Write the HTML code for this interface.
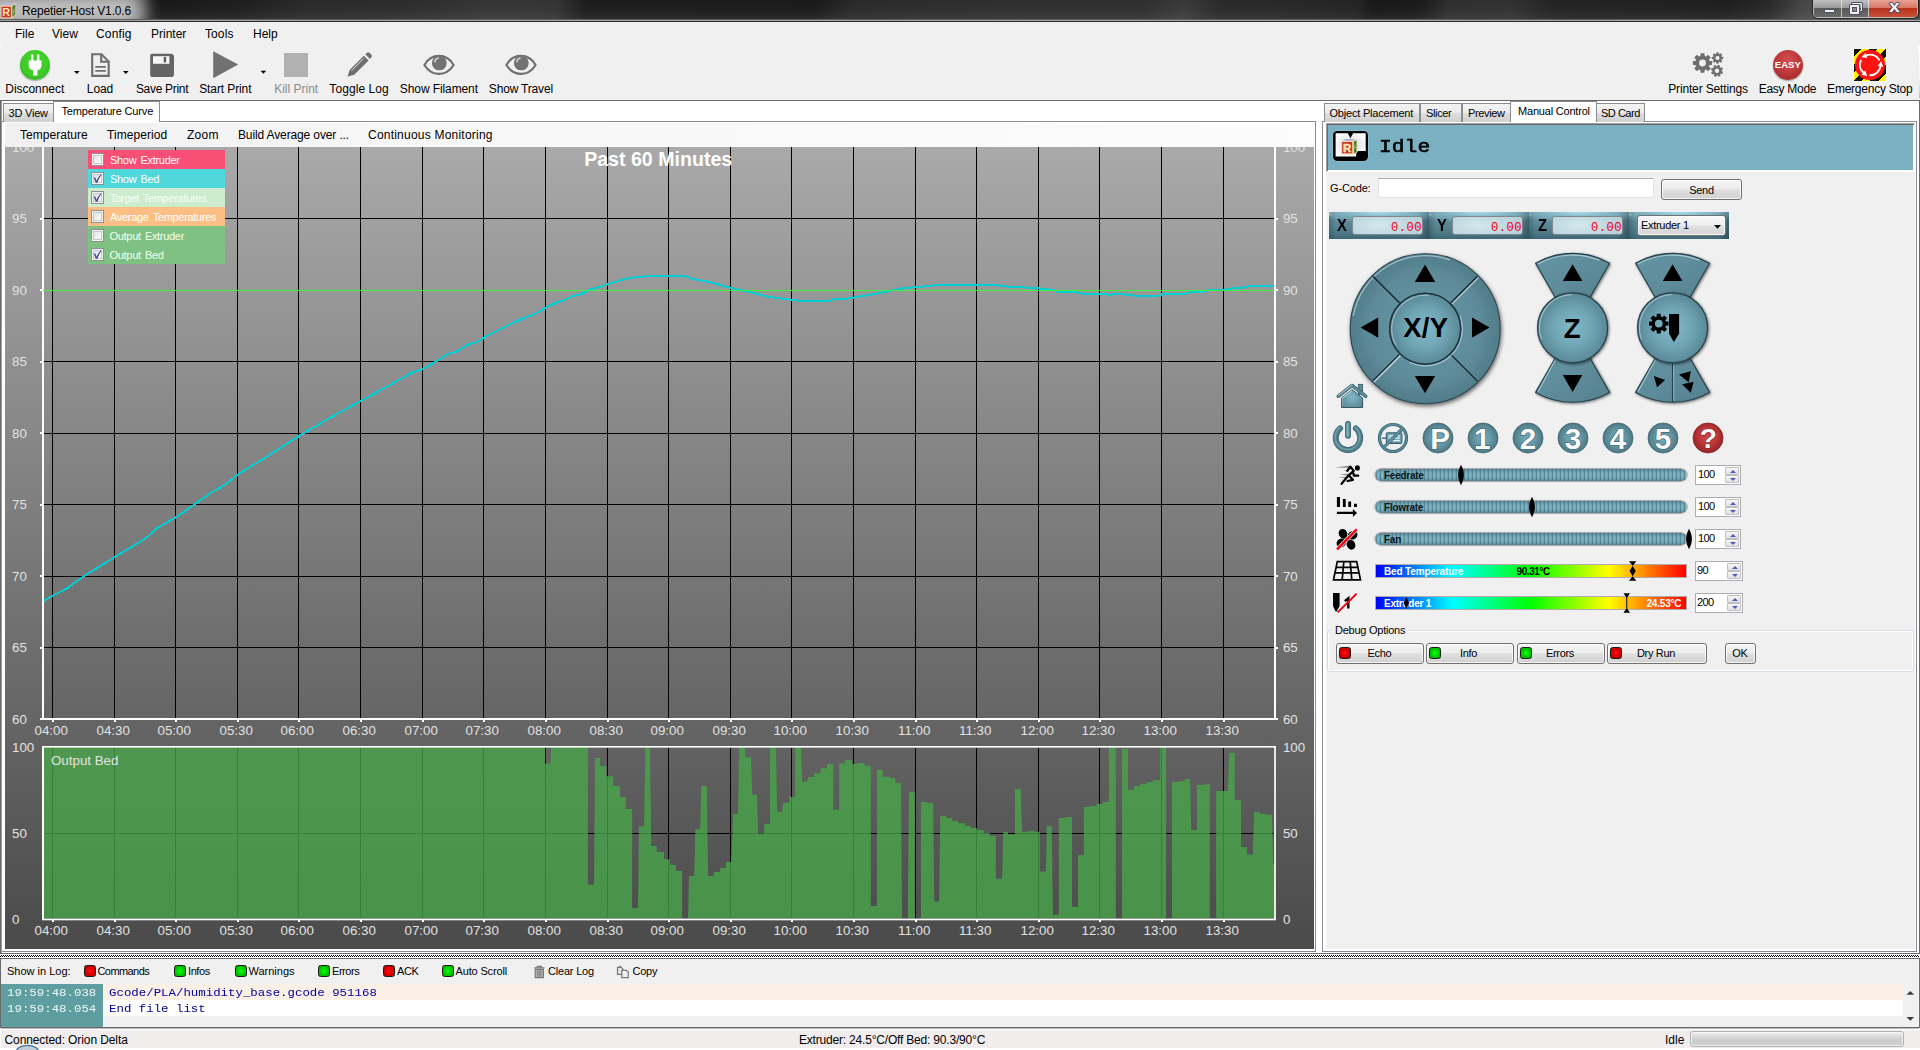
<!DOCTYPE html>
<html lang="en">
<head>
<meta charset="utf-8">
<title>Repetier-Host V1.0.6</title>
<style>
*{box-sizing:border-box;margin:0;padding:0}
html,body{width:1920px;height:1050px;overflow:hidden;background:#f0f0f0}
body{position:relative;font-family:"Liberation Sans",sans-serif;font-size:12px;color:#000}
.a{position:absolute}
.ui{position:absolute;font-family:"Liberation Sans",sans-serif;font-size:12px;line-height:14px;white-space:nowrap;color:#000}
.c{transform:translateX(-50%)}
.ms{position:absolute;font-family:"Liberation Sans",sans-serif;font-size:11px;line-height:13px;white-space:nowrap;color:#000;letter-spacing:-0.3px}
.tab{position:absolute;border:1px solid #898c95;border-bottom:none;background:linear-gradient(#f3f3f3 0%,#ececec 48%,#dedede 52%,#d0d0d0 100%);height:19px;top:103px}
.tab.sel{background:#fff;top:101px;height:21px;z-index:3}
.btn{position:absolute;border:1px solid #707070;border-radius:3px;background:linear-gradient(#f4f4f4 0%,#ececec 48%,#dedede 52%,#d1d1d1 100%);box-shadow:inset 0 0 0 1px rgba(255,255,255,.75)}
.led{position:absolute;width:12px;height:12px;border:1px solid #1a1a1a;border-radius:2.5px}
.led.r{background:radial-gradient(circle at 50% 50%,#ff1010 0%,#e00000 45%,#a80000 100%)}
.led.g{background:radial-gradient(circle at 50% 50%,#10ff10 0%,#00d800 45%,#009a00 100%)}
.cb{position:absolute;width:13px;height:13px;border:1px solid #8e8f8f;background:linear-gradient(135deg,#d8dbe0 0%,#f4f4f4 60%,#fff 100%);box-shadow:inset 0 0 0 1px #f4f4f4,inset 0 0 0 2px #c4c8cc}
.spin{position:absolute;height:20px;border:1px solid #abadb3;background:#fff}
.spin b{position:absolute;right:1px;width:14px;height:8px;border:1px solid #c0c0c0;border-radius:1px;background:linear-gradient(#f6f6f6,#e2e2e2);font-weight:normal}
.spin b.u{top:1px}.spin b.d{top:9px}
.spin b:after{content:"";position:absolute;left:3.5px;border-left:3px solid transparent;border-right:3px solid transparent}
.spin b.u:after{top:1.5px;border-bottom:3px solid #4a5cc0}
.spin b.d:after{top:1.5px;border-top:3px solid #4a5cc0}
.track{position:absolute;left:1375px;width:311.500px;height:12px;border-radius:6px;background:linear-gradient(rgba(35,75,90,.38) 0%,rgba(35,75,90,0) 32%,rgba(35,75,90,0) 68%,rgba(35,75,90,.38) 100%),repeating-linear-gradient(90deg,#7bb1c1 0px,#7bb1c1 3.200px,#507e8d 3.200px,#507e8d 4px);background-position:0 0,1.800px 0;box-shadow:0 0 1px .4px rgba(100,84,84,.85)}
.sl{position:absolute;font-family:"Liberation Sans",sans-serif;font-weight:bold;font-size:10px;line-height:12px;white-space:nowrap;letter-spacing:-0.25px}
.rb{position:absolute;left:1376px;width:310px;height:12px;background:linear-gradient(90deg,#0000ff 0%,#00ffff 25%,#00ff00 50%,#ffff00 75%,#ff0000 100%);box-shadow:0 0 0 1px rgba(150,140,140,.7)}

.seg{position:absolute;top:212px;width:100px;height:27px;background:
 radial-gradient(ellipse 70px 11px at 50% 0px,rgba(176,224,236,.95) 0%,rgba(150,200,214,.55) 50%,rgba(120,170,184,0) 100%),
 linear-gradient(90deg,rgba(30,60,72,.35) 0px,rgba(30,60,72,0) 7px,rgba(30,60,72,0) 88px,rgba(30,60,72,.55) 100px),
 linear-gradient(#6c9aa8 0%,#5d8997 40%,#4f7a88 75%,#3f6876 100%)}
.seg:before{content:"";position:absolute;left:0;top:0;width:3px;height:4px;background:#8d9fa6}
.fld{position:absolute;top:216px;width:71px;height:19px;border:1px solid #7f898d;border-radius:3px;background:radial-gradient(ellipse 40px 14px at 38% 50%,#d2e8ed 0%,#c3dae1 60%,#b9d1d9 100%)}
.xl{position:absolute;top:216.500px;font-family:"Liberation Sans",sans-serif;font-weight:bold;font-size:16px;line-height:18px;color:#000;transform:scaleX(.92);transform-origin:0 0}
.xv{position:absolute;top:220.500px;font-family:"Liberation Mono",monospace;font-size:12.200px;line-height:14px;color:#ee0018;white-space:nowrap;letter-spacing:.42px}
.rnd{position:absolute;top:423px;width:30px;height:30px;border-radius:50%;background:radial-gradient(circle at 50% 50%,#74a9b9 0%,#6699a9 50%,#55838f 85%,#4a7480 100%);box-shadow:0 0 0 .6px #3f6672,0 1px 1px rgba(0,0,0,.25)}
.mono{font-family:"Liberation Mono",monospace;font-size:11px;line-height:13px;white-space:nowrap;transform:scaleX(1.127);transform-origin:0 0}
</style>
</head>
<body>
<!-- TITLE BAR -->
<div class="a" id="title" style="left:0;top:0;width:1920px;height:22px;overflow:hidden;background:
linear-gradient(102deg,rgba(255,255,255,0) 0px,rgba(255,255,255,0) 150px,rgba(255,255,255,0.03) 240px,rgba(255,255,255,0.08) 300px,rgba(255,255,255,0.09) 400px,rgba(255,255,255,0.13) 480px,rgba(255,255,255,0.12) 545px,rgba(255,255,255,0.02) 575px,rgba(255,255,255,0.01) 800px,rgba(255,255,255,0.08) 835px,rgba(255,255,255,0.09) 900px,rgba(255,255,255,0.1) 1000px,rgba(255,255,255,0.1) 1120px,rgba(255,255,255,0.15) 1160px,rgba(255,255,255,0.08) 1195px,rgba(255,255,255,0.07) 1260px,rgba(255,255,255,0.05) 1330px,rgba(255,255,255,0) 1345px,rgba(255,255,255,0.01) 1390px,rgba(255,255,255,0.1) 1420px,rgba(255,255,255,0.11) 1480px,rgba(255,255,255,0.05) 1520px,rgba(255,255,255,0.03) 1690px,rgba(255,255,255,0.07) 1730px,rgba(255,255,255,0.2) 1765px,rgba(255,255,255,0.26) 1815px,rgba(255,255,255,0.1) 1920px),
linear-gradient(#171717 0%,#1c1c1c 45%,#2b2b2b 100%)">
  <div class="a" style="left:-30px;top:-12px;width:176px;height:44px;border-radius:18px;background:rgba(255,255,255,.64);filter:blur(8px)"></div>
  <div class="a" style="left:-10px;top:2px;width:140px;height:14px;border-radius:8px;background:rgba(255,255,255,.22);filter:blur(4px)"></div>
  <!-- app icon -->
  <svg class="a" style="left:0;top:0" width="17" height="20" viewBox="0 0 17 20">
    <path d="M.8 5.8L4.6 3.1L15.9 3.3L11.7 5.8z" fill="#cfc9d6"/>
    <path d="M2.5 4.8L5 3.5L14 3.7L11.3 5z" fill="#9aa0d0" fill-opacity=".7"/>
    <path d="M11.7 5.8L15.9 3.3V14.7L11.7 18.3z" fill="#ead8a8"/>
    <path d="M12.4 6.3L15.3 4.6V14.3L12.4 16.9z" fill="#3f7f2e"/>
    <rect x=".7" y="5.8" width="11" height="12.5" fill="#efd9ae"/>
    <rect x="1.5" y="6.7" width="9.4" height="10.7" fill="#c8352a"/>
    <text x="2.3" y="16.1" font-family="Liberation Sans, sans-serif" font-weight="bold" font-size="10.8" fill="#fbe7b4">R</text>
    <text x="12.7" y="14.8" font-family="Liberation Sans, sans-serif" font-weight="bold" font-size="7.5" fill="#d8b070" transform="translate(0,0) skewY(-30) translate(0,7.6)" textLength="2.4" lengthAdjust="spacingAndGlyphs">F</text>
  </svg>
  <div class="ui" style="left:22px;top:4px;letter-spacing:-0.15px">Repetier-Host V1.0.6</div>
  <!-- window buttons -->
  <div class="a" style="left:1813px;top:-1px;width:105px;height:19px;border:1px solid rgba(230,230,230,.7);border-top:none;border-radius:0 0 5px 5px;overflow:hidden;box-shadow:0 0 0 1px rgba(0,0,0,.5)">
    <div class="a" style="left:0;top:0;width:28px;height:19px;background:linear-gradient(#c4c4c4 0%,#9a9a9a 45%,#5a5a5a 50%,#6d6d6d 100%);border-right:1px solid rgba(235,235,235,.7)"></div>
    <div class="a" style="left:28px;top:0;width:27px;height:19px;background:linear-gradient(#c4c4c4 0%,#9a9a9a 45%,#5a5a5a 50%,#6d6d6d 100%);border-right:1px solid rgba(235,235,235,.7)"></div>
    <div class="a" style="left:55px;top:0;width:49px;height:19px;background:linear-gradient(#e9a99a 0%,#d8796a 45%,#b8321c 50%,#c9553a 100%)"></div>
    <div class="a" style="left:9.5px;top:9.5px;width:11px;height:4px;background:#f4f4f4;border:1px solid #4a4f63;border-radius:1px"></div>
    <div class="a" style="left:38px;top:3.5px;width:9.5px;height:8.5px;border:1.5px solid #f4f4f4;box-shadow:0 0 0 1px #4a4f63;border-radius:1px"></div>
    <div class="a" style="left:35.5px;top:6px;width:9.5px;height:8.5px;border:2.2px solid #f4f4f4;box-shadow:0 0 0 1px #4a4f63,inset 0 0 0 1px #4a4f63;border-radius:1px;background:#8a8a8a"></div>
    <div class="a" style="left:74.5px;top:-2px;font-family:'Liberation Sans',sans-serif;font-weight:bold;font-size:17px;line-height:19px;color:#f6f6f6;text-shadow:0 0 1px #4a4f63,1px 0 0 #4a4f63,-1px 0 0 #4a4f63,0 1px 0 #4a4f63,0 -1px 0 #4a4f63;transform:scaleX(1.15);transform-origin:0 0">x</div>
  </div>
  <div class="a" style="left:0;top:19px;width:1920px;height:1px;background:#5c5c5c"></div>
  <div class="a" style="left:0;top:20px;width:1920px;height:1px;background:#a2a2a2"></div>
  <div class="a" style="left:0;top:21px;width:1920px;height:1px;background:#2b2b2b"></div>
</div>
<!-- MENU BAR -->
<div class="a" style="left:0;top:22px;width:1920px;height:78px;background:#f0f0f0"></div>
<div class="ui" style="left:15px;top:27px">File</div>
<div class="ui" style="left:52px;top:27px">View</div>
<div class="ui" style="left:96px;top:27px;letter-spacing:.15px">Config</div>
<div class="ui" style="left:151px;top:27px">Printer</div>
<div class="ui" style="left:205px;top:27px;letter-spacing:.1px">Tools</div>
<div class="ui" style="left:253px;top:27px">Help</div>
<!-- TOOLBAR -->
<div class="a" style="left:20px;top:50px;width:30px;height:30px;border-radius:50%;background:radial-gradient(circle at 50% 42%,#46d22e 0%,#3fcc2a 55%,#2fae1f 85%,#238a17 100%);box-shadow:0 1px 1.5px rgba(0,0,0,.35)"></div>
<svg class="a" style="left:20px;top:50px" width="30" height="30" viewBox="0 0 30 30"><path d="M11 4.6h2.3v6H11z M17.1 4.6h2.3v6h-2.3z M8.7 10.4h12.8v5.2c0 2.6-1.7 4.4-4.1 4.6v5.2h-4.4v-5.2c-2.5-.2-4.3-2-4.3-4.6z" fill="#fff"/></svg>
<svg class="a" style="left:73px;top:70px" width="8" height="5" viewBox="0 0 8 5"><path d="M1 1h5.6L3.8 4z" fill="#000"/></svg>
<svg class="a" style="left:122px;top:70px" width="8" height="5" viewBox="0 0 8 5"><path d="M1 1h5.6L3.8 4z" fill="#000"/></svg>
<svg class="a" style="left:260px;top:70px" width="8" height="5" viewBox="0 0 8 5"><path d="M0.6 0.8h5.6L3.4 3.8z" fill="#000"/></svg>
<!-- load doc -->
<svg class="a" style="left:90px;top:52px" width="22" height="26" viewBox="0 0 22 26"><path d="M2.2 2.3h9.3l7.2 7.3v14.3H2.2z" fill="none" stroke="#6e6e6e" stroke-width="2.1" stroke-linejoin="miter"/><path d="M11.2 2.3v7.5h7.4" fill="none" stroke="#6e6e6e" stroke-width="2.1"/><path d="M5.3 14.8h10.6M5.3 18.8h10.6" stroke="#6e6e6e" stroke-width="1.8"/></svg>
<!-- save floppy -->
<svg class="a" style="left:150px;top:53px" width="25" height="25" viewBox="0 0 25 25"><path d="M1.8 0.7h20.2l2 2v19.4a1.8 1.8 0 0 1-1.8 1.8H1.8A1.6 1.6 0 0 1 .2 22.3V2.3A1.6 1.6 0 0 1 1.8.7z" fill="#646464"/><rect x="3" y="3.2" width="16.4" height="7.6" fill="#f4f4f4"/><rect x="13.7" y="4" width="2.4" height="5.4" fill="#5a5a5a"/></svg>
<!-- play -->
<svg class="a" style="left:212px;top:50px" width="28" height="30" viewBox="0 0 28 30"><path d="M1.2 1.2L26.2 14.6L1.2 28.2z" fill="#717171"/></svg>
<!-- stop (disabled) -->
<div class="a" style="left:284px;top:53px;width:24px;height:24px;background:#b1b1b1"></div>
<!-- pencil -->
<svg class="a" style="left:346px;top:51px" width="27" height="27" viewBox="0 0 27 27"><path d="M1.6 25.6l2-6.6L17.9 4.7l4.7 4.7L8.2 23.7z" fill="#6e6e6e"/><path d="M19.3 3.3l1.3-1.3a2.2 2.2 0 0 1 3.1 0l1.5 1.5a2.2 2.2 0 0 1 0 3.1l-1.3 1.3z" fill="#6e6e6e"/><path d="M5.6 19.6L17.6 7.6" stroke="#e4e4e4" stroke-width="1" fill="none"/></svg>
<!-- eyes -->
<svg class="a" style="left:422px;top:53px" width="34" height="24" viewBox="0 0 34 24"><path d="M2.4 12C6 5.5 11 2.9 17 2.9S28 5.5 31.6 12C28 17.8 23 20.9 17 20.9S6 17.8 2.4 12z" fill="none" stroke="#6e6e6e" stroke-width="2.1" stroke-linejoin="round"/><circle cx="17.3" cy="9.9" r="7.4" fill="#727272"/><path d="M12.8 9.2a5 5 0 0 1 3.8-4.3" fill="none" stroke="#ececec" stroke-width="1.3"/></svg>
<svg class="a" style="left:504px;top:53px" width="34" height="24" viewBox="0 0 34 24"><path d="M2.4 12C6 5.5 11 2.9 17 2.9S28 5.5 31.6 12C28 17.8 23 20.9 17 20.9S6 17.8 2.4 12z" fill="none" stroke="#6e6e6e" stroke-width="2.1" stroke-linejoin="round"/><circle cx="17.3" cy="9.9" r="7.4" fill="#727272"/><path d="M12.8 9.2a5 5 0 0 1 3.8-4.3" fill="none" stroke="#ececec" stroke-width="1.3"/></svg>
<!-- gears -->
<svg class="a" style="left:1690px;top:50px" width="36" height="30" viewBox="0 0 36 30">
 <g fill="#6e6e6e">
  <g transform="translate(12.5,13)"><circle r="7.3"/><g id="tg"><rect x="-2.1" y="-9.7" width="4.2" height="19.4" rx=".8"/><rect x="-2.1" y="-9.7" width="4.2" height="19.4" rx=".8" transform="rotate(45)"/><rect x="-2.1" y="-9.7" width="4.2" height="19.4" rx=".8" transform="rotate(90)"/><rect x="-2.1" y="-9.7" width="4.2" height="19.4" rx=".8" transform="rotate(135)"/></g><circle r="3.4" fill="#f0f0f0"/></g>
  <g transform="translate(27.5,8) scale(.58)"><circle r="7.3"/><use href="#tg"/><circle r="3.6" fill="#f0f0f0"/></g>
  <g transform="translate(27,20.8) scale(.62) rotate(20)"><circle r="7.3"/><use href="#tg"/><circle r="3.6" fill="#f0f0f0"/></g>
 </g>
</svg>
<!-- easy -->
<div class="a" style="left:1772.5px;top:49.5px;width:30.5px;height:30.5px;border-radius:50%;background:radial-gradient(circle at 50% 35%,#cf5052 0%,#c03a3c 45%,#a82c2e 80%,#8c2022 100%);box-shadow:0 1px 1.5px rgba(0,0,0,.35)"></div>
<div class="a" style="left:1787.8px;top:59.3px;transform:translateX(-50%);font-weight:bold;font-size:9.6px;line-height:11px;color:#fff;letter-spacing:0">EASY</div>
<!-- emergency -->
<div class="a" style="left:1854px;top:49px;width:32px;height:32px;background:repeating-linear-gradient(135deg,#101010 0px,#101010 5.1px,#f9f500 5.1px,#f9f500 10.85px,#101010 10.85px,#101010 11.53px);box-shadow:0 0 0 1px rgba(250,250,255,.8)"></div>
<div class="a" style="left:1855.4px;top:50.2px;width:29.4px;height:29.4px;border-radius:50%;background:radial-gradient(circle at 50% 48%,#ff1414 0%,#fd1212 72%,#e00e0e 90%,#c40a0a 100%)"></div>
<svg class="a" style="left:1855px;top:50px" width="30" height="30" viewBox="0 0 30 30"><path d="M24.12 9.75A10.3 10.3 0 0 0 11.34 5.35M5.87 10.55A10.3 10.3 0 0 0 8.31 22.55M15.2 25.2A10.3 10.3 0 0 0 25.4 16.33" fill="none" stroke="#fff" stroke-width="1.9" stroke-linecap="round"/><path d="M6.52 7.3L10.29 2.75L12.39 7.95zM12.17 26.03L6.43 24.64L10.18 20.47zM26.12 11.18L28.17 16.72L22.63 15.94z" fill="#fff"/></svg>
<!-- labels -->
<div class="ui c" style="left:34.8px;top:82px;letter-spacing:-0.05px">Disconnect</div>
<div class="ui c" style="left:100px;top:82px;letter-spacing:-0.1px">Load</div>
<div class="ui c" style="left:162.1px;top:82px;letter-spacing:-0.3px">Save Print</div>
<div class="ui c" style="left:225.3px;top:82px;letter-spacing:-0.1px">Start Print</div>
<div class="ui c" style="left:296.2px;top:82px;color:#8a8a8a">Kill Print</div>
<div class="ui c" style="left:359.1px;top:82px;letter-spacing:.08px">Toggle Log</div>
<div class="ui c" style="left:438.9px;top:82px;letter-spacing:-0.1px">Show Filament</div>
<div class="ui c" style="left:520.9px;top:82px;letter-spacing:-0.18px">Show Travel</div>
<div class="ui c" style="left:1708px;top:82px;letter-spacing:-0.15px">Printer Settings</div>
<div class="ui c" style="left:1787.5px;top:82px;letter-spacing:-0.28px">Easy Mode</div>
<div class="ui c" style="left:1869.8px;top:82px;letter-spacing:-0.24px">Emergency Stop</div>
<div class="a" style="left:1917px;top:46px;width:3px;height:1px;background:#fff"></div>
<div class="a" style="left:1918px;top:47px;width:1px;height:3px;background:#fff"></div>
<div class="a" style="left:0;top:46px;width:2px;height:1px;background:#fff"></div>
<div class="a" style="left:1919px;top:47px;width:1px;height:51px;background:linear-gradient(#fdfdfd 0%,#f6f6f6 60%,#dcdcdc 80%,#b9b9b9 100%)"></div>
<!-- frame lines -->
<div class="a" style="left:0;top:100px;width:1920px;height:1px;background:#6a6a6a"></div>
<div class="a" style="left:0;top:101px;width:1920px;height:852px;background:#fff"></div>
<div class="a" style="left:0;top:100px;width:1px;height:859px;background:#6a6a6a"></div>
<div class="a" style="left:1px;top:101px;width:1px;height:852px;background:#9a9ca4"></div>
<div class="a" style="left:1919px;top:100px;width:1px;height:854px;background:#6a6a6a"></div>
<!-- LEFT TAB CONTROL -->
<div class="a" style="left:2px;top:121px;width:1314px;height:831px;border:1px solid #898c95;border-left:none;background:#fff"></div>
<div class="tab" style="left:3px;width:51px"></div><div class="ms" style="left:8.5px;top:106.5px;letter-spacing:-0.2px">3D View</div>
<div class="tab sel" style="left:53px;width:107px"></div><div class="ms" style="left:61.5px;top:104.5px;z-index:4;letter-spacing:-0.15px">Temperature Curve</div>
<!-- chart menu -->
<div class="a" style="left:5px;top:123px;width:1309px;height:24px;background:linear-gradient(90deg,#f0f0f0 0%,#f7f7f7 30%,#fcfcfc 100%)"></div>
<div class="ui" style="left:20px;top:128px;letter-spacing:.03px">Temperature</div>
<div class="ui" style="left:107px;top:128px;letter-spacing:.08px">Timeperiod</div>
<div class="ui" style="left:187px;top:128px;letter-spacing:.25px">Zoom</div>
<div class="ui" style="left:238px;top:128px;letter-spacing:-0.13px">Build Average over ...</div>
<div class="ui" style="left:368px;top:128px;letter-spacing:.22px">Continuous Monitoring</div>
<svg width="1309" height="802" viewBox="0 0 1309 802" style="position:absolute;left:5px;top:147px" shape-rendering="crispEdges">
<defs><linearGradient id="cbg" x1="0" y1="0" x2="0" y2="1"><stop offset="0" stop-color="#a9a9a9"/><stop offset="1" stop-color="#4a4a4a"/></linearGradient></defs>
<rect x="0" y="0" width="1309" height="802" fill="url(#cbg)"/>
<rect x="47" y="0" width="1" height="571" fill="#000"/>
<rect x="109" y="0" width="1" height="571" fill="#000"/>
<rect x="170" y="0" width="1" height="571" fill="#000"/>
<rect x="232" y="0" width="1" height="571" fill="#000"/>
<rect x="293" y="0" width="1" height="571" fill="#000"/>
<rect x="355" y="0" width="1" height="571" fill="#000"/>
<rect x="417" y="0" width="1" height="571" fill="#000"/>
<rect x="478" y="0" width="1" height="571" fill="#000"/>
<rect x="540" y="0" width="1" height="571" fill="#000"/>
<rect x="602" y="0" width="1" height="571" fill="#000"/>
<rect x="663" y="0" width="1" height="571" fill="#000"/>
<rect x="725" y="0" width="1" height="571" fill="#000"/>
<rect x="786" y="0" width="1" height="571" fill="#000"/>
<rect x="848" y="0" width="1" height="571" fill="#000"/>
<rect x="910" y="0" width="1" height="571" fill="#000"/>
<rect x="971" y="0" width="1" height="571" fill="#000"/>
<rect x="1033" y="0" width="1" height="571" fill="#000"/>
<rect x="1094" y="0" width="1" height="571" fill="#000"/>
<rect x="1156" y="0" width="1" height="571" fill="#000"/>
<rect x="1218" y="0" width="1" height="571" fill="#000"/>
<rect x="39" y="71" width="1230" height="1" fill="#000"/>
<rect x="39" y="214" width="1230" height="1" fill="#000"/>
<rect x="39" y="286" width="1230" height="1" fill="#000"/>
<rect x="39" y="357" width="1230" height="1" fill="#000"/>
<rect x="39" y="429" width="1230" height="1" fill="#000"/>
<rect x="39" y="500" width="1230" height="1" fill="#000"/>
<rect x="38" y="143" width="1231" height="1" fill="#3cf53c"/>
<rect x="37" y="0" width="2" height="573" fill="#fff"/>
<rect x="1269" y="0" width="2" height="573" fill="#fff"/>
<rect x="35" y="571" width="1238" height="2" fill="#fff"/>
<rect x="38" y="143" width="1" height="1" fill="#3cf53c"/>
<rect x="47" y="573" width="2" height="2" fill="#fff"/>
<rect x="109" y="573" width="2" height="2" fill="#fff"/>
<rect x="170" y="573" width="2" height="2" fill="#fff"/>
<rect x="232" y="573" width="2" height="2" fill="#fff"/>
<rect x="293" y="573" width="2" height="2" fill="#fff"/>
<rect x="355" y="573" width="2" height="2" fill="#fff"/>
<rect x="417" y="573" width="2" height="2" fill="#fff"/>
<rect x="478" y="573" width="2" height="2" fill="#fff"/>
<rect x="540" y="573" width="2" height="2" fill="#fff"/>
<rect x="602" y="573" width="2" height="2" fill="#fff"/>
<rect x="663" y="573" width="2" height="2" fill="#fff"/>
<rect x="725" y="573" width="2" height="2" fill="#fff"/>
<rect x="786" y="573" width="2" height="2" fill="#fff"/>
<rect x="848" y="573" width="2" height="2" fill="#fff"/>
<rect x="910" y="573" width="2" height="2" fill="#fff"/>
<rect x="971" y="573" width="2" height="2" fill="#fff"/>
<rect x="1033" y="573" width="2" height="2" fill="#fff"/>
<rect x="1094" y="573" width="2" height="2" fill="#fff"/>
<rect x="1156" y="573" width="2" height="2" fill="#fff"/>
<rect x="1218" y="573" width="2" height="2" fill="#fff"/>
<rect x="35" y="71" width="2" height="2" fill="#fff"/>
<rect x="1271" y="71" width="2" height="2" fill="#fff"/>
<rect x="35" y="142" width="2" height="2" fill="#fff"/>
<rect x="1271" y="142" width="2" height="2" fill="#fff"/>
<rect x="35" y="214" width="2" height="2" fill="#fff"/>
<rect x="1271" y="214" width="2" height="2" fill="#fff"/>
<rect x="35" y="285" width="2" height="2" fill="#fff"/>
<rect x="1271" y="285" width="2" height="2" fill="#fff"/>
<rect x="35" y="357" width="2" height="2" fill="#fff"/>
<rect x="1271" y="357" width="2" height="2" fill="#fff"/>
<rect x="35" y="428" width="2" height="2" fill="#fff"/>
<rect x="1271" y="428" width="2" height="2" fill="#fff"/>
<rect x="35" y="500" width="2" height="2" fill="#fff"/>
<rect x="1271" y="500" width="2" height="2" fill="#fff"/>
<rect x="47" y="601" width="1" height="170" fill="#000"/>
<rect x="109" y="601" width="1" height="170" fill="#000"/>
<rect x="170" y="601" width="1" height="170" fill="#000"/>
<rect x="232" y="601" width="1" height="170" fill="#000"/>
<rect x="293" y="601" width="1" height="170" fill="#000"/>
<rect x="355" y="601" width="1" height="170" fill="#000"/>
<rect x="417" y="601" width="1" height="170" fill="#000"/>
<rect x="478" y="601" width="1" height="170" fill="#000"/>
<rect x="540" y="601" width="1" height="170" fill="#000"/>
<rect x="602" y="601" width="1" height="170" fill="#000"/>
<rect x="663" y="601" width="1" height="170" fill="#000"/>
<rect x="725" y="601" width="1" height="170" fill="#000"/>
<rect x="786" y="601" width="1" height="170" fill="#000"/>
<rect x="848" y="601" width="1" height="170" fill="#000"/>
<rect x="910" y="601" width="1" height="170" fill="#000"/>
<rect x="971" y="601" width="1" height="170" fill="#000"/>
<rect x="1033" y="601" width="1" height="170" fill="#000"/>
<rect x="1094" y="601" width="1" height="170" fill="#000"/>
<rect x="1156" y="601" width="1" height="170" fill="#000"/>
<rect x="1218" y="601" width="1" height="170" fill="#000"/>
<rect x="39" y="686" width="1230" height="1" fill="#000"/>
<polygon shape-rendering="geometricPrecision" fill="rgba(72,168,72,0.76)" points="39,771.2 39,599.6 540,599.6 540,616.5 545.4,616.5 546.3,599.6 582.9,599.6 582.9,737.7 589,737.7 590,611 595,611 595,619 601.3,619 601.3,629.2 608.1,629.2 608.1,639 614.9,639 614.9,650 620.8,650 620.8,661.9 627.1,661.9 627.1,760.9 633,760.9 633.9,679.2 639.1,679.2 640.3,599.6 644.9,599.6 646.3,699 651.7,699 651.7,705 659,705 659,712.3 664.9,712.3 664.9,717.8 670.8,717.8 670.8,723.8 677.1,723.8 677.1,771.2 683,771.2 684,729.1 689.2,729.1 690.4,682.3 695.2,682.3 696.2,639 701.9,639 703.1,728.9 708.7,728.9 708.7,725 715.2,725 715.2,721 720.9,721 720.9,715.1 726.2,715.1 728.2,667 733,667 734.2,599.6 740.1,599.6 740.1,610.2 746,610.2 747.2,647.8 752,647.8 753.1,686.3 759.1,686.3 759.1,677 765,677 765,599.6 770.9,599.6 772.1,664.8 777,664.8 778.2,655.8 784.2,655.8 784.2,650 790.1,650 790.1,599.6 796,599.6 797.2,634.8 802,634.8 803.1,630 809.2,630 809.2,626.2 815.5,626.2 815.5,621.2 822,621.2 822,617 828.2,617 828.2,662.8 834.2,662.8 834.2,616.2 840.1,616.2 840.1,613.1 846.8,613.1 846.8,617 852.7,617 852.7,616 859.5,616 859.5,618.7 865.8,618.7 865.8,758.9 871.9,758.9 871.9,622.8 877.8,622.8 877.8,629.7 884.4,629.7 884.4,630.9 890.3,630.9 890.3,636 895.9,636 897.1,771.2 902.7,771.2 903.9,645 909.8,645 909.8,771.2 915.9,771.2 915.9,655 921.9,655 921.9,656 928.1,656 929.3,754.6 934.1,754.6 935.3,669 941.2,669 941.2,671 947.1,671 947.1,674.1 953.2,674.1 953.2,676.2 960,676.2 960,678.9 965.9,678.9 965.9,680.9 971.9,680.9 971.9,683.1 978.6,683.1 978.6,686 984.9,686 984.9,688.9 990.8,688.9 990.8,731.7 997.1,731.7 998.3,685.1 1003,685.1 1003,687.2 1009.9,687.2 1009.9,641.9 1015.8,641.9 1017,684.8 1023,684.8 1023,684 1028.9,684 1028.9,684.8 1034.8,684.8 1034.8,724.6 1040.8,724.6 1041.9,678.9 1046.7,678.9 1047.9,767.8 1053.8,767.8 1053.8,671 1060.3,671 1060.3,669.9 1067,669.9 1067,759.7 1073,759.7 1073,708 1078.9,708 1078.9,660 1085.3,660 1085.3,658.9 1091.6,658.9 1091.6,656.7 1097.9,656.7 1097.9,655 1104,655 1104,599.6 1110.8,599.6 1110.8,771.2 1117,771.2 1117,602 1123,602 1123,642.8 1128.9,642.8 1128.9,638.9 1135.3,638.9 1135.3,636.8 1141.6,636.8 1141.6,635.1 1148.1,635.1 1148.1,632.9 1155.2,632.9 1155.2,599.6 1161.1,599.6 1161.1,771.2 1167,771.2 1167,635.1 1173.3,635.1 1173.3,634 1179.7,634 1179.7,632.1 1185.2,632.1 1186.2,682.9 1192,682.9 1192,638 1198.4,638 1198.4,637.2 1204.8,637.2 1204.8,771.2 1211.1,771.2 1211.1,644 1223,644 1224.2,606 1229.7,606 1229.7,652.9 1236,652.9 1236,699.9 1242,699.9 1242,707.5 1247.9,707.5 1249.1,665.1 1254.8,665.1 1254.8,666.8 1261.1,666.8 1261.1,667.8 1267,667.8 1268.2,717 1270.6,717 1270.6,771.2"/>
<rect x="37" y="599" width="2" height="174" fill="#fff"/>
<rect x="1269" y="599" width="2" height="174" fill="#fff" fill-opacity="0.85"/>
<rect x="37" y="599" width="1234" height="1.6" fill="#fff" shape-rendering="geometricPrecision"/>
<rect x="37" y="771.6" width="1234" height="1.7" fill="#fff" shape-rendering="geometricPrecision"/>
<rect x="47" y="773" width="2" height="2" fill="#fff"/>
<rect x="109" y="773" width="2" height="2" fill="#fff"/>
<rect x="170" y="773" width="2" height="2" fill="#fff"/>
<rect x="232" y="773" width="2" height="2" fill="#fff"/>
<rect x="293" y="773" width="2" height="2" fill="#fff"/>
<rect x="355" y="773" width="2" height="2" fill="#fff"/>
<rect x="417" y="773" width="2" height="2" fill="#fff"/>
<rect x="478" y="773" width="2" height="2" fill="#fff"/>
<rect x="540" y="773" width="2" height="2" fill="#fff"/>
<rect x="602" y="773" width="2" height="2" fill="#fff"/>
<rect x="663" y="773" width="2" height="2" fill="#fff"/>
<rect x="725" y="773" width="2" height="2" fill="#fff"/>
<rect x="786" y="773" width="2" height="2" fill="#fff"/>
<rect x="848" y="773" width="2" height="2" fill="#fff"/>
<rect x="910" y="773" width="2" height="2" fill="#fff"/>
<rect x="971" y="773" width="2" height="2" fill="#fff"/>
<rect x="1033" y="773" width="2" height="2" fill="#fff"/>
<rect x="1094" y="773" width="2" height="2" fill="#fff"/>
<rect x="1156" y="773" width="2" height="2" fill="#fff"/>
<rect x="1218" y="773" width="2" height="2" fill="#fff"/>
<polyline shape-rendering="crispEdges" fill="none" stroke="#00ced4" stroke-width="2" stroke-linejoin="round" points="38.8,453.9 47.5,448.9 62.4,441.1 79.6,428.7 109.6,410.2 141.3,391 151.6,381.6 170.8,370.4 189.3,357.6 206.4,345.6 220.1,337.9 232.7,327.6 257.9,312.1 294.7,288.6 325.9,270.4 355.5,254.1 380.7,240.4 406.4,225.9 417.6,222.1 432.1,213.9 442.4,207.3 451,204.9 463.9,197.2 471.6,195.3 478.4,191.1 488.7,185.1 504.1,177.9 521.3,169.8 527.3,168.4 540.7,160.7 552.1,155.2 559.9,153 567.6,149.1 576.1,147.3 584.7,142.7 596.7,139.3 602,137.4 612.7,134.2 625,131 642.8,128.9 678.2,128.9 690.6,132.5 704.8,135.1 719,139 731.4,142.2 745.5,145.2 763.2,149.7 780.9,152 793.3,153.7 823.4,153.7 830.5,152 842.9,151.6 855.3,149.3 873,146.3 887.2,143.5 899.6,141 917.3,139.6 935,137.8 988.75,137.9 1003.75,139.6 1030,141.1 1048.75,143 1054.4,144.9 1071.25,145.25 1078.75,147.1 1101.25,147.3 1104,148.25 1107.8,146.75 1116.25,147.1 1129.4,148.6 1154.7,148.6 1157.5,147.1 1180,146.75 1185.6,144.9 1198.75,144.5 1204.4,143 1219.4,142.6 1228.75,141.1 1238.1,140.75 1243.75,138.9 1268.1,138.9"/>
<rect x="39" y="143" width="1230" height="1" fill="#3cf53c"/>
<text x="7" y="5.3" font-family="Liberation Sans, sans-serif" font-size="13.33" font-weight="normal" fill="#e2e2e2" text-anchor="start">100</text>
<text x="1277.9" y="5.3" font-family="Liberation Sans, sans-serif" font-size="13.33" font-weight="normal" fill="#e2e2e2" text-anchor="start">100</text>
<text x="7" y="76.3" font-family="Liberation Sans, sans-serif" font-size="13.33" font-weight="normal" fill="#e2e2e2" text-anchor="start">95</text>
<text x="1277.9" y="76.3" font-family="Liberation Sans, sans-serif" font-size="13.33" font-weight="normal" fill="#e2e2e2" text-anchor="start">95</text>
<text x="7" y="148.3" font-family="Liberation Sans, sans-serif" font-size="13.33" font-weight="normal" fill="#e2e2e2" text-anchor="start">90</text>
<text x="1277.9" y="148.3" font-family="Liberation Sans, sans-serif" font-size="13.33" font-weight="normal" fill="#e2e2e2" text-anchor="start">90</text>
<text x="7" y="219.3" font-family="Liberation Sans, sans-serif" font-size="13.33" font-weight="normal" fill="#e2e2e2" text-anchor="start">85</text>
<text x="1277.9" y="219.3" font-family="Liberation Sans, sans-serif" font-size="13.33" font-weight="normal" fill="#e2e2e2" text-anchor="start">85</text>
<text x="7" y="291.3" font-family="Liberation Sans, sans-serif" font-size="13.33" font-weight="normal" fill="#e2e2e2" text-anchor="start">80</text>
<text x="1277.9" y="291.3" font-family="Liberation Sans, sans-serif" font-size="13.33" font-weight="normal" fill="#e2e2e2" text-anchor="start">80</text>
<text x="7" y="362.3" font-family="Liberation Sans, sans-serif" font-size="13.33" font-weight="normal" fill="#e2e2e2" text-anchor="start">75</text>
<text x="1277.9" y="362.3" font-family="Liberation Sans, sans-serif" font-size="13.33" font-weight="normal" fill="#e2e2e2" text-anchor="start">75</text>
<text x="7" y="434.3" font-family="Liberation Sans, sans-serif" font-size="13.33" font-weight="normal" fill="#e2e2e2" text-anchor="start">70</text>
<text x="1277.9" y="434.3" font-family="Liberation Sans, sans-serif" font-size="13.33" font-weight="normal" fill="#e2e2e2" text-anchor="start">70</text>
<text x="7" y="505.3" font-family="Liberation Sans, sans-serif" font-size="13.33" font-weight="normal" fill="#e2e2e2" text-anchor="start">65</text>
<text x="1277.9" y="505.3" font-family="Liberation Sans, sans-serif" font-size="13.33" font-weight="normal" fill="#e2e2e2" text-anchor="start">65</text>
<text x="7" y="577.3" font-family="Liberation Sans, sans-serif" font-size="13.33" font-weight="normal" fill="#e2e2e2" text-anchor="start">60</text>
<text x="1277.9" y="577.3" font-family="Liberation Sans, sans-serif" font-size="13.33" font-weight="normal" fill="#e2e2e2" text-anchor="start">60</text>
<text x="46.2" y="588" font-family="Liberation Sans, sans-serif" font-size="13.33" font-weight="normal" fill="#e2e2e2" text-anchor="middle">04:00</text>
<text x="46.2" y="788" font-family="Liberation Sans, sans-serif" font-size="13.33" font-weight="normal" fill="#e2e2e2" text-anchor="middle">04:00</text>
<text x="108.2" y="588" font-family="Liberation Sans, sans-serif" font-size="13.33" font-weight="normal" fill="#e2e2e2" text-anchor="middle">04:30</text>
<text x="108.2" y="788" font-family="Liberation Sans, sans-serif" font-size="13.33" font-weight="normal" fill="#e2e2e2" text-anchor="middle">04:30</text>
<text x="169.2" y="588" font-family="Liberation Sans, sans-serif" font-size="13.33" font-weight="normal" fill="#e2e2e2" text-anchor="middle">05:00</text>
<text x="169.2" y="788" font-family="Liberation Sans, sans-serif" font-size="13.33" font-weight="normal" fill="#e2e2e2" text-anchor="middle">05:00</text>
<text x="231.2" y="588" font-family="Liberation Sans, sans-serif" font-size="13.33" font-weight="normal" fill="#e2e2e2" text-anchor="middle">05:30</text>
<text x="231.2" y="788" font-family="Liberation Sans, sans-serif" font-size="13.33" font-weight="normal" fill="#e2e2e2" text-anchor="middle">05:30</text>
<text x="292.2" y="588" font-family="Liberation Sans, sans-serif" font-size="13.33" font-weight="normal" fill="#e2e2e2" text-anchor="middle">06:00</text>
<text x="292.2" y="788" font-family="Liberation Sans, sans-serif" font-size="13.33" font-weight="normal" fill="#e2e2e2" text-anchor="middle">06:00</text>
<text x="354.2" y="588" font-family="Liberation Sans, sans-serif" font-size="13.33" font-weight="normal" fill="#e2e2e2" text-anchor="middle">06:30</text>
<text x="354.2" y="788" font-family="Liberation Sans, sans-serif" font-size="13.33" font-weight="normal" fill="#e2e2e2" text-anchor="middle">06:30</text>
<text x="416.2" y="588" font-family="Liberation Sans, sans-serif" font-size="13.33" font-weight="normal" fill="#e2e2e2" text-anchor="middle">07:00</text>
<text x="416.2" y="788" font-family="Liberation Sans, sans-serif" font-size="13.33" font-weight="normal" fill="#e2e2e2" text-anchor="middle">07:00</text>
<text x="477.2" y="588" font-family="Liberation Sans, sans-serif" font-size="13.33" font-weight="normal" fill="#e2e2e2" text-anchor="middle">07:30</text>
<text x="477.2" y="788" font-family="Liberation Sans, sans-serif" font-size="13.33" font-weight="normal" fill="#e2e2e2" text-anchor="middle">07:30</text>
<text x="539.2" y="588" font-family="Liberation Sans, sans-serif" font-size="13.33" font-weight="normal" fill="#e2e2e2" text-anchor="middle">08:00</text>
<text x="539.2" y="788" font-family="Liberation Sans, sans-serif" font-size="13.33" font-weight="normal" fill="#e2e2e2" text-anchor="middle">08:00</text>
<text x="601.2" y="588" font-family="Liberation Sans, sans-serif" font-size="13.33" font-weight="normal" fill="#e2e2e2" text-anchor="middle">08:30</text>
<text x="601.2" y="788" font-family="Liberation Sans, sans-serif" font-size="13.33" font-weight="normal" fill="#e2e2e2" text-anchor="middle">08:30</text>
<text x="662.2" y="588" font-family="Liberation Sans, sans-serif" font-size="13.33" font-weight="normal" fill="#e2e2e2" text-anchor="middle">09:00</text>
<text x="662.2" y="788" font-family="Liberation Sans, sans-serif" font-size="13.33" font-weight="normal" fill="#e2e2e2" text-anchor="middle">09:00</text>
<text x="724.2" y="588" font-family="Liberation Sans, sans-serif" font-size="13.33" font-weight="normal" fill="#e2e2e2" text-anchor="middle">09:30</text>
<text x="724.2" y="788" font-family="Liberation Sans, sans-serif" font-size="13.33" font-weight="normal" fill="#e2e2e2" text-anchor="middle">09:30</text>
<text x="785.2" y="588" font-family="Liberation Sans, sans-serif" font-size="13.33" font-weight="normal" fill="#e2e2e2" text-anchor="middle">10:00</text>
<text x="785.2" y="788" font-family="Liberation Sans, sans-serif" font-size="13.33" font-weight="normal" fill="#e2e2e2" text-anchor="middle">10:00</text>
<text x="847.2" y="588" font-family="Liberation Sans, sans-serif" font-size="13.33" font-weight="normal" fill="#e2e2e2" text-anchor="middle">10:30</text>
<text x="847.2" y="788" font-family="Liberation Sans, sans-serif" font-size="13.33" font-weight="normal" fill="#e2e2e2" text-anchor="middle">10:30</text>
<text x="909.2" y="588" font-family="Liberation Sans, sans-serif" font-size="13.33" font-weight="normal" fill="#e2e2e2" text-anchor="middle">11:00</text>
<text x="909.2" y="788" font-family="Liberation Sans, sans-serif" font-size="13.33" font-weight="normal" fill="#e2e2e2" text-anchor="middle">11:00</text>
<text x="970.2" y="588" font-family="Liberation Sans, sans-serif" font-size="13.33" font-weight="normal" fill="#e2e2e2" text-anchor="middle">11:30</text>
<text x="970.2" y="788" font-family="Liberation Sans, sans-serif" font-size="13.33" font-weight="normal" fill="#e2e2e2" text-anchor="middle">11:30</text>
<text x="1032.2" y="588" font-family="Liberation Sans, sans-serif" font-size="13.33" font-weight="normal" fill="#e2e2e2" text-anchor="middle">12:00</text>
<text x="1032.2" y="788" font-family="Liberation Sans, sans-serif" font-size="13.33" font-weight="normal" fill="#e2e2e2" text-anchor="middle">12:00</text>
<text x="1093.2" y="588" font-family="Liberation Sans, sans-serif" font-size="13.33" font-weight="normal" fill="#e2e2e2" text-anchor="middle">12:30</text>
<text x="1093.2" y="788" font-family="Liberation Sans, sans-serif" font-size="13.33" font-weight="normal" fill="#e2e2e2" text-anchor="middle">12:30</text>
<text x="1155.2" y="588" font-family="Liberation Sans, sans-serif" font-size="13.33" font-weight="normal" fill="#e2e2e2" text-anchor="middle">13:00</text>
<text x="1155.2" y="788" font-family="Liberation Sans, sans-serif" font-size="13.33" font-weight="normal" fill="#e2e2e2" text-anchor="middle">13:00</text>
<text x="1217.2" y="588" font-family="Liberation Sans, sans-serif" font-size="13.33" font-weight="normal" fill="#e2e2e2" text-anchor="middle">13:30</text>
<text x="1217.2" y="788" font-family="Liberation Sans, sans-serif" font-size="13.33" font-weight="normal" fill="#e2e2e2" text-anchor="middle">13:30</text>
<text x="7" y="605" font-family="Liberation Sans, sans-serif" font-size="13.33" font-weight="normal" fill="#e2e2e2" text-anchor="start">100</text>
<text x="1277.9" y="605" font-family="Liberation Sans, sans-serif" font-size="13.33" font-weight="normal" fill="#e2e2e2" text-anchor="start">100</text>
<text x="7" y="691" font-family="Liberation Sans, sans-serif" font-size="13.33" font-weight="normal" fill="#e2e2e2" text-anchor="start">50</text>
<text x="1277.9" y="691" font-family="Liberation Sans, sans-serif" font-size="13.33" font-weight="normal" fill="#e2e2e2" text-anchor="start">50</text>
<text x="7" y="777" font-family="Liberation Sans, sans-serif" font-size="13.33" font-weight="normal" fill="#e2e2e2" text-anchor="start">0</text>
<text x="1277.9" y="777" font-family="Liberation Sans, sans-serif" font-size="13.33" font-weight="normal" fill="#e2e2e2" text-anchor="start">0</text>
<text x="46" y="618" font-family="Liberation Sans, sans-serif" font-size="13.33" font-weight="normal" fill="#e2e2e2" text-anchor="start">Output Bed</text>
<text x="653.2" y="18.6" font-family="Liberation Sans, sans-serif" font-size="19.6" font-weight="bold" fill="#ffffff" text-anchor="middle">Past 60 Minutes</text>
</svg>
<!-- legend -->
<div class="a" style="left:88px;top:150px;width:137px;height:19px;background:#f84f77"></div>
<div class="a" style="left:88px;top:169px;width:137px;height:19px;background:#4fd8dc"></div>
<div class="a" style="left:88px;top:188px;width:137px;height:19px;background:#cdebcd"></div>
<div class="a" style="left:88px;top:207px;width:137px;height:19px;background:#fbbf85"></div>
<div class="a" style="left:88px;top:226px;width:137px;height:38px;background:#7fc183"></div>
<div class="cb" style="left:91px;top:153px"></div>
<div class="cb" style="left:91px;top:172px"></div>
<div class="cb" style="left:91px;top:191px"></div>
<div class="cb" style="left:91px;top:210px"></div>
<div class="cb" style="left:91px;top:229px"></div>
<div class="cb" style="left:91px;top:248px"></div>
<svg class="a" style="left:91px;top:172px" width="13" height="13" viewBox="0 0 13 13"><path d="M2.8 5.6l1.5 0l1.3 3.2c1-2.7 2.3-4.8 4.4-6.6l.6.5c-1.9 2.2-3.1 4.7-4.2 8.1l-1.6 0z" fill="#38499c"/></svg>
<svg class="a" style="left:91px;top:191px" width="13" height="13" viewBox="0 0 13 13"><path d="M2.8 5.6l1.5 0l1.3 3.2c1-2.7 2.3-4.8 4.4-6.6l.6.5c-1.9 2.2-3.1 4.7-4.2 8.1l-1.6 0z" fill="#38499c"/></svg>
<svg class="a" style="left:91px;top:248px" width="13" height="13" viewBox="0 0 13 13"><path d="M2.8 5.6l1.5 0l1.3 3.2c1-2.7 2.3-4.8 4.4-6.6l.6.5c-1.9 2.2-3.1 4.7-4.2 8.1l-1.6 0z" fill="#38499c"/></svg>
<div class="ms" style="left:110px;top:153.5px;word-spacing:1.4px;color:#fff">Show Extruder</div>
<div class="ms" style="left:110px;top:172.5px;word-spacing:1.4px;color:#fff">Show Bed</div>
<div class="ms" style="left:110px;top:191.5px;word-spacing:1.4px;color:#f6fff6">Target Temperatures</div>
<div class="ms" style="left:110px;top:210.5px;word-spacing:1.4px;color:#fff">Average Temperatures</div>
<div class="ms" style="left:109.5px;top:229.5px;word-spacing:1.4px;color:#f4ffea">Output Extruder</div>
<div class="ms" style="left:109.5px;top:248.5px;word-spacing:1.4px;color:#f4ffea">Output Bed</div>
<!-- RIGHT TAB CONTROL -->
<div class="a" style="left:1322px;top:121px;width:595px;height:831px;border:1px solid #898c95;background:#fff"></div>
<div class="a" style="left:1326px;top:123px;width:589px;height:826px;background:#f0f0f0"></div>
<div class="tab" style="left:1324px;width:96px"></div><div class="ms" style="left:1329.5px;top:106.5px;letter-spacing:-0.2px">Object Placement</div>
<div class="tab" style="left:1420px;width:42px"></div><div class="ms" style="left:1426px;top:106.5px;letter-spacing:-0.35px">Slicer</div>
<div class="tab" style="left:1462px;width:49px"></div><div class="ms" style="left:1468px;top:106.5px;letter-spacing:-0.35px">Preview</div>
<div class="tab sel" style="left:1510px;width:87px"></div><div class="ms" style="left:1518px;top:104.5px;z-index:4;letter-spacing:-0.2px">Manual Control</div>
<div class="tab" style="left:1596px;width:49px"></div><div class="ms" style="left:1601px;top:106.5px;letter-spacing:-0.48px">SD Card</div>
<!-- idle panel -->
<div class="a" style="left:1326px;top:123px;width:589px;height:49px;background:#7ab0c2;border-top:1px solid #a0a0a0;border-left:1px solid #a0a0a0;border-bottom:1px solid #fff;border-right:1px solid #fff;box-shadow:inset 1px 1px 0 #696969,inset -1px -1px 0 #fff"></div>
<div class="a" style="left:1333px;top:131px;width:35px;height:30px;border-radius:4.5px;background:#000;box-shadow:0 0 0 .6px rgba(150,210,225,.7)"></div>
<svg class="a" style="left:1333px;top:131px" width="35" height="30" viewBox="0 0 35 30">
 <defs><radialGradient id="ig" cx="50%" cy="50%" r="60%"><stop offset="0" stop-color="#d6d6d6"/><stop offset=".55" stop-color="#ececec"/><stop offset="1" stop-color="#ffffff"/></radialGradient></defs>
 <path d="M2.6 2.2H14.8L17.4 7.2L20.1 2.2H32.7V20.1H26.4C24.4 20.1 23.2 21.3 23.2 23.2V25.5H2.6z" fill="url(#ig)"/>
 <path d="M8.1 10L12 7.9L24.1 8.3L20.1 10z" fill="#d9d2dc"/><path d="M10.5 9.3L12.6 8.3L22 8.6L20 9.5z" fill="#7d86d4" fill-opacity=".75"/>
 <path d="M20.1 10L24.1 8.3V21.5L20.1 23.4z" fill="#ecd9aa"/><path d="M20.9 10.5L23.5 9.4V21L20.9 22.3z" fill="#3d7c2c"/>
 <rect x="8.1" y="10" width="12" height="13.4" fill="#efd9ae"/><rect x="9.1" y="11" width="10.1" height="11.3" fill="#c6342a"/>
 <text x="9.9" y="21.1" font-family="Liberation Sans, sans-serif" font-weight="bold" font-size="11.4" fill="#fbe6b0" stroke="#fbe6b0" stroke-width=".45">R</text>
 <text x="21.1" y="19.4" font-family="Liberation Sans, sans-serif" font-weight="bold" font-size="7" fill="#d0a868" textLength="2.2" lengthAdjust="spacingAndGlyphs">F</text>
</svg>
<div class="a" style="left:1379px;top:137px;font-family:'Liberation Mono',monospace;font-weight:normal;-webkit-text-stroke:.55px #000;font-size:18px;line-height:20px;white-space:nowrap;color:#000;transform:scaleX(1.185);transform-origin:0 0">Idle</div>
<!-- gcode row -->
<div class="ms" style="left:1330px;top:181.5px;letter-spacing:-0.15px">G-Code:</div>
<div class="a" style="left:1378px;top:178px;width:276px;height:20px;background:#fff;border:1px solid #e2e3ea;border-top-color:#abadb3;border-radius:1px"></div>
<div class="btn" style="left:1661px;top:179px;width:81px;height:21px"></div><div class="ms" style="left:1701.5px;top:183.5px;transform:translateX(-50%)">Send</div>
<!-- XYZ bar -->
<div class="a" id="xyz" style="left:1329px;top:212px;width:400px;height:27px;background:#5a8694"></div>
<div class="seg" style="left:1329px"></div><div class="seg" style="left:1429px"></div><div class="seg" style="left:1529px"></div><div class="seg" style="left:1629px"></div>
<div class="fld" style="left:1352px"></div><div class="fld" style="left:1452px"></div><div class="fld" style="left:1552px"></div>
<div class="xl" style="left:1337px">X</div><div class="xl" style="left:1437px">Y</div><div class="xl" style="left:1537.5px">Z</div>
<div class="xv" style="left:1391px">0.00</div><div class="xv" style="left:1491px">0.00</div><div class="xv" style="left:1591px">0.00</div>
<div class="a" style="left:1637px;top:215px;width:89px;height:21px;border:1px solid #6d7477;border-radius:3px;background:linear-gradient(#f6f6f6 0%,#efefef 48%,#e0e0e0 52%,#d4d4d4 100%);box-shadow:inset 0 0 0 1px rgba(255,255,255,.8)"></div>
<div class="ms" style="left:1641px;top:219px;letter-spacing:-0.3px">Extruder 1</div>
<svg class="a" style="left:1713px;top:223.5px" width="9" height="6" viewBox="0 0 9 6"><path d="M1 1h7L4.5 4.8z" fill="#000"/></svg>
<svg class="a" style="left:1330px;top:244px" width="400" height="172" viewBox="1330 244 400 172">
<defs>
<radialGradient id="gin" cx="50%" cy="50%" r="50%"><stop offset="0" stop-color="#82b8c8"/><stop offset=".55" stop-color="#6fa5b5"/><stop offset="1" stop-color="#5a8896"/></radialGradient>
<radialGradient id="gout" cx="50%" cy="50%" r="50%"><stop offset="0" stop-color="#6797a6"/><stop offset=".75" stop-color="#5e8b99"/><stop offset="1" stop-color="#517c8a"/></radialGradient>
<linearGradient id="gw" x1="0" y1="0" x2="1" y2="1"><stop offset="0" stop-color="#6596a5"/><stop offset="1" stop-color="#56818f"/></linearGradient>
<filter id="sh" x="-20%" y="-20%" width="150%" height="150%"><feGaussianBlur in="SourceAlpha" stdDeviation="2"/><feOffset dx="1.3" dy="2"/><feComponentTransfer><feFuncA type="linear" slope=".6"/></feComponentTransfer><feMerge><feMergeNode/><feMergeNode in="SourceGraphic"/></feMerge></filter>
<filter id="sh2" x="-20%" y="-20%" width="150%" height="150%"><feGaussianBlur in="SourceAlpha" stdDeviation="1.5"/><feOffset dx=".8" dy="1.2"/><feComponentTransfer><feFuncA type="linear" slope=".55"/></feComponentTransfer><feMerge><feMergeNode/><feMergeNode in="SourceGraphic"/></feMerge></filter>
</defs>
<g filter="url(#sh)"><circle cx="1425.2" cy="328.7" r="75" fill="url(#gout)" stroke="#294550" stroke-width="1.1"/></g>
<path d="M1353.3 316A73 73 0 0 1 1450.2 260.1" fill="none" stroke="rgba(215,240,246,.55)" stroke-width="1.3"/>
<path d="M1451 302.9L1477.5 276.4" stroke="#1b3038" stroke-width="1.7"/>
<path d="M1452 303.9L1478.5 277.4" stroke="rgba(235,248,250,.8)" stroke-width="1.1"/>
<path d="M1451 354.5L1477.5 381" stroke="#1b3038" stroke-width="1.7"/>
<path d="M1451.9 353.6L1478.4 380.1" stroke="rgba(200,230,238,.22)" stroke-width="1"/>
<path d="M1399.4 354.5L1372.9 381" stroke="#1b3038" stroke-width="1.7"/>
<path d="M1400.4 355.5L1373.9 382" stroke="rgba(235,248,250,.8)" stroke-width="1.1"/>
<path d="M1399.4 302.9L1372.9 276.4" stroke="#1b3038" stroke-width="1.7"/>
<path d="M1398.5 303.8L1372 277.3" stroke="rgba(200,230,238,.22)" stroke-width="1"/>
<circle cx="1425.2" cy="328.7" r="37.1" fill="none" stroke="rgba(220,242,247,.55)" stroke-width="1.2" stroke-dasharray="87.4 999" transform="rotate(-20 1425.2 328.7)"/>
<circle cx="1425.2" cy="328.7" r="35.5" fill="url(#gin)" stroke="#1b3038" stroke-width="1.5"/>
<circle cx="1425.2" cy="328.7" r="33.5" fill="none" stroke="rgba(215,240,246,.5)" stroke-width="1.1" stroke-dasharray="73.7 999" transform="rotate(150 1425.2 328.7)"/>
<path d="M1425 264.6L1435.2 282H1414.8z M1425 393.2L1435.2 376H1414.8z M1360.6 327.6L1378.2 317.4V337.8z M1489.6 327.6L1472 317.4V337.8z" fill="#000"/>
<text x="1425.8" y="337.2" text-anchor="middle" font-family="Liberation Sans, sans-serif" font-weight="bold" font-size="27.5" letter-spacing=".3" fill="#000">X/Y</text>
<radialGradient id="hg" gradientUnits="userSpaceOnUse" cx="1352" cy="397" r="12"><stop offset="0" stop-color="#80b8c8"/><stop offset=".6" stop-color="#6a9cab"/><stop offset="1" stop-color="#5b8997"/></radialGradient>
<g><path d="M1341.5 398.1V407.5H1362.6V398.1L1352.1 389.6z" fill="url(#hg)" stroke="#2a4c58" stroke-width=".9" stroke-linejoin="round"/>
<rect x="1358.5" y="384.3" width="4.2" height="10" fill="#5f8e9c" stroke="#2a4c58" stroke-width=".7"/>
<path d="M1338.2 396.3L1352 385.4L1365.8 396.3" fill="none" stroke="#2f5562" stroke-width="3.4" stroke-linecap="round" stroke-linejoin="round"/>
<path d="M1338.2 396.3L1352 385.4L1365.8 396.3" fill="none" stroke="#5f8e9c" stroke-width="2.2" stroke-linecap="round" stroke-linejoin="round"/></g>
<path d="M1338.3 395.5L1352 384.7" fill="none" stroke="rgba(235,250,253,.7)" stroke-width=".8"/>
<path d="M1342.4 398.4L1351.9 390.7" fill="none" stroke="rgba(240,252,255,.85)" stroke-width=".9"/>
<path d="M1342.3 398.6V406.5" fill="none" stroke="rgba(235,250,253,.45)" stroke-width=".8"/>
<g filter="url(#sh2)"><path d="M1557.7 301.8L1535.6 263.2A74.5 74.5 0 0 1 1609.6 263.2L1587.5 301.8z" fill="url(#gw)" stroke="#264049" stroke-width="1.2" stroke-linejoin="round"/></g>
<path d="M1538.1 263.8A72.7 72.7 0 0 1 1599.6 260.3" fill="none" stroke="rgba(220,244,249,.6)" stroke-width="1.1"/>
<g filter="url(#sh2)"><path d="M1587.5 353.8L1609.6 392.4A74.5 74.5 0 0 1 1535.6 392.4L1557.7 353.8z" fill="url(#gw)" stroke="#264049" stroke-width="1.2" stroke-linejoin="round"/></g>
<path d="M1555.5 359.5L1538.1 391.6" fill="none" stroke="rgba(220,244,249,.6)" stroke-width="1.1"/>
<g filter="url(#sh2)"><circle cx="1572.6" cy="327.8" r="35" fill="url(#gin)" stroke="#264049" stroke-width="1.3"/></g>
<circle cx="1572.6" cy="327.8" r="33.2" fill="none" stroke="rgba(220,244,249,.5)" stroke-width="1.1" stroke-dasharray="62.6 999" transform="rotate(160 1572.6 327.8)"/>
<path d="M1572.6 264.2L1582.3999999999999 281H1562.8z M1572.6 392L1582.3999999999999 375H1562.8z" fill="#000"/>
<text x="1572.1999999999998" y="338.1" text-anchor="middle" font-family="Liberation Sans, sans-serif" font-weight="bold" font-size="27.5" fill="#000">Z</text>
<g filter="url(#sh2)"><path d="M1657.7 301.8L1635.6 263.2A74.5 74.5 0 0 1 1709.6 263.2L1687.5 301.8z" fill="url(#gw)" stroke="#264049" stroke-width="1.2" stroke-linejoin="round"/></g>
<path d="M1638.1 263.8A72.7 72.7 0 0 1 1699.6 260.3" fill="none" stroke="rgba(220,244,249,.6)" stroke-width="1.1"/>
<g filter="url(#sh2)"><path d="M1687.5 353.8L1709.6 392.4A74.5 74.5 0 0 1 1635.6 392.4L1657.7 353.8z" fill="url(#gw)" stroke="#264049" stroke-width="1.2" stroke-linejoin="round"/></g>
<path d="M1655.5 359.5L1638.1 391.6" fill="none" stroke="rgba(220,244,249,.6)" stroke-width="1.1"/>
<path d="M1672.6 361.8V401.8" stroke="#264049" stroke-width="1.3"/><path d="M1673.6999999999998 363.8V400.8" stroke="rgba(220,244,249,.5)" stroke-width="1"/>
<g filter="url(#sh2)"><circle cx="1672.6" cy="327.8" r="35" fill="url(#gin)" stroke="#264049" stroke-width="1.3"/></g>
<circle cx="1672.6" cy="327.8" r="33.2" fill="none" stroke="rgba(220,244,249,.5)" stroke-width="1.1" stroke-dasharray="62.6 999" transform="rotate(160 1672.6 327.8)"/>
<path d="M1672.6 264.2L1682.3999999999999 281H1662.8z" fill="#000"/>
<g transform="translate(1658.8,323.6)" fill="#000"><circle r="7.3"/><rect x="-2.1" y="-9.8" width="4.2" height="19.6" rx=".7" transform="rotate(0)"/><rect x="-2.1" y="-9.8" width="4.2" height="19.6" rx=".7" transform="rotate(45)"/><rect x="-2.1" y="-9.8" width="4.2" height="19.6" rx=".7" transform="rotate(90)"/><rect x="-2.1" y="-9.8" width="4.2" height="19.6" rx=".7" transform="rotate(135)"/><circle r="3.9" fill="#74a9b9"/></g>
<path d="M1669 313.9H1679.1V333.4L1674.2 341.6H1673.4L1669 333.4z" fill="#000"/>
<path d="M1653.9 376L1665.1 380.1L1657 387.2z M1679 374.4L1690.8 371.2L1688.7 382.2z M1682.1 384.3L1693.6 381.7L1690.8 392.7z" fill="#000"/>
</svg>
<!-- round buttons -->
<svg class="a" style="left:1330px;top:418px" width="400" height="40" viewBox="1330 418 400 40">
 <defs>
  <radialGradient id="rg" cx="50%" cy="50%" r="50%"><stop offset="0" stop-color="#78adbd"/><stop offset=".5" stop-color="#6799a8"/><stop offset=".85" stop-color="#56848f"/><stop offset="1" stop-color="#4b7581"/></radialGradient>
  <radialGradient id="rr" cx="50%" cy="45%" r="50%"><stop offset="0" stop-color="#d0484a"/><stop offset=".6" stop-color="#bf383a"/><stop offset="1" stop-color="#9c2628"/></radialGradient>
  <linearGradient id="pg" x1="0" y1="0" x2="1" y2="0"><stop offset="0" stop-color="#4f7b88"/><stop offset=".5" stop-color="#7fb4c4"/><stop offset="1" stop-color="#4f7b88"/></linearGradient>
 </defs>
 <!-- power -->
 <path d="M1340.1 428.4A12.3 12.3 0 1 0 1355.9 428.4" fill="none" stroke="#34606e" stroke-width="5.8" stroke-linecap="round"/>
 <path d="M1340.1 428.4A12.3 12.3 0 1 0 1355.9 428.4" fill="none" stroke="#557f8d" stroke-width="4.4" stroke-linecap="round"/>
 <path d="M1339.7 428A12.3 12.3 0 1 0 1355.5 428" fill="none" stroke="#6d9fae" stroke-width="1.6" stroke-linecap="round" transform="translate(-.2,-.3)"/>
 <path d="M1348 424V435.8" fill="none" stroke="#34606e" stroke-width="5.8" stroke-linecap="round"/>
 <path d="M1348 424V435.8" fill="none" stroke="#5a8796" stroke-width="4.4" stroke-linecap="round"/>
 <path d="M1347.6 424V435.8" fill="none" stroke="#7fb6c6" stroke-width="1.8" stroke-linecap="round"/>
 <!-- motor off -->
 <circle cx="1393" cy="438" r="13.5" fill="none" stroke="#34606e" stroke-width="3.2"/>
 <circle cx="1393" cy="438" r="13.5" fill="none" stroke="#5a8a98" stroke-width="1.8"/>
 <path d="M1382 438.2H1386.5" stroke="#4f7b88" stroke-width="1.6"/>
 <rect x="1386.3" y="432.7" width="15.6" height="10.7" rx="1.3" fill="#6fa4b4" stroke="#34606e" stroke-width="1.1"/>
 <path d="M1388.5 435.8H1400 M1388.5 438.2H1400 M1388.5 440.6H1400" stroke="#e8f4f7" stroke-width="1.3"/>
 <path d="M1384.4 446.9L1402.2 428.8" stroke="#34606e" stroke-width="3.2"/>
 <path d="M1384.4 446.9L1402.2 428.8" stroke="#6a9dac" stroke-width="1.5"/>
 <!-- filled circles -->
 <g stroke="#3f6672" stroke-width=".8">
  <circle cx="1438" cy="438" r="15" fill="url(#rg)"/><circle cx="1483" cy="438" r="15" fill="url(#rg)"/><circle cx="1528" cy="438" r="15" fill="url(#rg)"/><circle cx="1573" cy="438" r="15" fill="url(#rg)"/><circle cx="1618" cy="438" r="15" fill="url(#rg)"/><circle cx="1663" cy="438" r="15" fill="url(#rg)"/>
  <circle cx="1708" cy="438" r="15" fill="url(#rr)" stroke="#8a2224"/>
 </g>
 <g font-family="Liberation Sans, sans-serif" font-weight="bold" font-size="29.6" text-anchor="middle" fill="#fbfbfb" stroke="#3c626d" stroke-width="1.2" paint-order="stroke" stroke-linejoin="round">
  <text x="1440" y="448.5">P</text><text x="1482.2" y="448.5">1</text><text x="1528" y="448.5">2</text><text x="1573" y="448.5">3</text><text x="1618" y="448.5">4</text><text x="1663" y="448.5">5</text>
  <text x="1708.2" y="448" stroke="#8a2224" font-size="28">?</text>
 </g>
</svg>
<!-- sliders -->
<div class="track" style="top:469px"></div><div class="track" style="top:501px"></div><div class="track" style="top:533px"></div>
<div class="sl" style="left:1384px;top:469.5px;color:#06141c">Feedrate</div>
<div class="sl" style="left:1384px;top:501.5px;color:#06141c">Flowrate</div>
<div class="sl" style="left:1384px;top:533.5px;color:#06141c">Fan</div>
<svg class="a" style="left:1456px;top:464px" width="10" height="22" viewBox="0 0 10 22"><path d="M5 .8C6.6 4 7.9 7 7.9 11S6.6 18 5 21.2C3.4 18 2.1 15 2.1 11S3.4 4 5 .8z" fill="#000"/></svg>
<svg class="a" style="left:1527.4px;top:496px" width="10" height="22" viewBox="0 0 10 22"><path d="M5 .8C6.6 4 7.9 7 7.9 11S6.6 18 5 21.2C3.4 18 2.1 15 2.1 11S3.4 4 5 .8z" fill="#000"/></svg>
<svg class="a" style="left:1684.4px;top:528px" width="10" height="22" viewBox="0 0 10 22"><path d="M5 .8C6.6 4 7.9 7 7.9 11S6.6 18 5 21.2C3.4 18 2.1 15 2.1 11S3.4 4 5 .8z" fill="#000"/></svg>
<!-- slider icons -->
<svg class="a" style="left:1334px;top:464px" width="28" height="22" viewBox="0 0 28 22">
 <path d="M1.1 3.4L15.5 1.6L15.5 4z M9.1 6.5L13.5 6L13.5 7.2z M5.4 10.3L14.5 9.8L14.5 11.8z M4 13.3L12.5 12.7L12.5 14.4z" fill="#555" fill-opacity=".6"/>
 <ellipse cx="23.4" cy="3.9" rx="2.5" ry="2.7" fill="#000"/>
 <path d="M13.3 6.8L16.4 2.8L19.7 6.9L14.6 11.3L7.6 19.8 M14.6 11.3L19 15.8L13.6 17 M19.5 9.3L19.8 11.7L24.2 11.7" fill="none" stroke="#000" stroke-width="2.25" stroke-linecap="round" stroke-linejoin="round"/>
</svg>
<svg class="a" style="left:1335px;top:496px" width="24" height="22" viewBox="0 0 24 22">
 <path d="M1.9 1.1h3.1v9.8H1.9z M7.9 3.1h2.8v7.8H7.9z M13.3 5.4h2.8v5.5h-2.8z M19 7.7h2.9v3.2H19z" fill="#000"/>
 <path d="M1.9 15.7h16v-2.8l4.1 4l-4.1 4v-2.9H1.9z" fill="#000"/>
</svg>
<svg class="a" style="left:1335px;top:527px" width="24" height="24" viewBox="0 0 24 24">
 <g fill="#000"><ellipse cx="8" cy="6.8" rx="4.2" ry="5" transform="rotate(-25 8 6.8)"/><ellipse cx="17.6" cy="8.2" rx="5" ry="4.2" transform="rotate(-25 17.6 8.2)"/><ellipse cx="16" cy="17.8" rx="4.2" ry="5" transform="rotate(-25 16 17.8)"/><ellipse cx="6.4" cy="15.9" rx="5" ry="4.2" transform="rotate(-25 6.4 15.9)"/><circle cx="12" cy="12.2" r="2.6"/></g>
 <path d="M2.6 21.8L21.2 2.9" stroke="#f0f0f0" stroke-width="3.8"/><path d="M2.1 22.3L21.7 2.4" stroke="#f50016" stroke-width="2.5"/>
</svg>
<svg class="a" style="left:1332px;top:560px" width="30" height="22" viewBox="0 0 30 22">
 <path d="M5.3 1.7H24.7L28.5 19.8H1.5z" fill="none" stroke="#000" stroke-width="1.7"/>
 <path d="M4 7.3H26 M2.9 12.9H27.1 M11.8 1.7L10.2 19.8 M18.2 1.7L19.8 19.8" fill="none" stroke="#000" stroke-width="1.7"/>
</svg>
<svg class="a" style="left:1332px;top:592px" width="28" height="22" viewBox="0 0 28 22">
 <path d="M1 .9H7.6V14L4.6 19.4H3.6L1 14z" fill="#000"/>
 <path d="M12.8 9.2L16.3 6.3V16.6" fill="none" stroke="#000" stroke-width="2.4"/>
 <path d="M5.6 20.4L24.6 1.8" stroke="#f00018" stroke-width="1.9"/>
</svg>
<!-- temp bars -->
<div class="rb" style="top:565px"></div><div class="rb" style="top:597px"></div>
<div class="sl" style="left:1384px;top:565.5px;color:#fff;letter-spacing:-0.15px">Bed Temperature</div>
<div class="sl" style="left:1516.5px;top:565.5px;color:#000;letter-spacing:-0.4px">90.31°C</div>
<div class="sl" style="left:1384px;top:597.5px;color:#fff">Extruder 1</div>
<div class="sl" style="left:1646.5px;top:597.5px;color:#fff;letter-spacing:-0.2px">24.53°C</div>
<svg class="a" style="left:1627px;top:560px" width="12" height="22" viewBox="0 0 12 22"><path d="M2 1.2H9.4L5.7 5.8L8.8 11L5.7 16.2L9.4 20.8H2L5.7 16.2L2.6 11L5.7 5.8z" fill="#000"/></svg>
<svg class="a" style="left:1621px;top:592px" width="12" height="22" viewBox="0 0 12 22"><path d="M2.5 1.2H9L5.75 6z M2.5 20.8H9L5.75 16z" fill="#000"/><path d="M5.75 5V17" stroke="#000" stroke-width="1"/></svg>
<svg class="a" style="left:1403px;top:597px" width="7" height="12" viewBox="0 0 7 12"><path d="M3.4 .2L6.2 6L3.4 11.8L.6 6z" fill="#000"/></svg>
<!-- spinners -->
<div class="spin" style="left:1695px;top:465px;width:46px"><b class="u"></b><b class="d"></b></div><div class="ms" style="left:1698px;top:468px;letter-spacing:-0.6px">100</div>
<div class="spin" style="left:1695px;top:497px;width:46px"><b class="u"></b><b class="d"></b></div><div class="ms" style="left:1698px;top:500px;letter-spacing:-0.6px">100</div>
<div class="spin" style="left:1695px;top:529px;width:46px"><b class="u"></b><b class="d"></b></div><div class="ms" style="left:1698px;top:532px;letter-spacing:-0.6px">100</div>
<div class="spin" style="left:1695px;top:561px;width:48px"><b class="u"></b><b class="d"></b></div><div class="ms" style="left:1697px;top:564px;letter-spacing:-0.6px">90</div>
<div class="spin" style="left:1695px;top:593px;width:48px"><b class="u"></b><b class="d"></b></div><div class="ms" style="left:1697px;top:596px;letter-spacing:-0.6px">200</div>
<!-- debug options -->
<div class="a" style="left:1327px;top:630px;width:587px;height:42px;border:1px solid #d5dfe5;border-radius:3px;box-shadow:inset 0 0 0 1px #fff"></div>
<div class="ms" style="left:1333px;top:623.5px;background:#f0f0f0;padding:0 2px;letter-spacing:-0.25px">Debug Options</div>
<div class="btn" style="left:1336px;top:643px;width:88px;height:21px"></div><div class="led r" style="left:1339px;top:647px"></div><div class="ms" style="left:1379.5px;top:647px;transform:translateX(-50%)">Echo</div>
<div class="btn" style="left:1426px;top:643px;width:88px;height:21px"></div><div class="led g" style="left:1429px;top:647px"></div><div class="ms" style="left:1468.5px;top:647px;transform:translateX(-50%)">Info</div>
<div class="btn" style="left:1517px;top:643px;width:88px;height:21px"></div><div class="led g" style="left:1520px;top:647px"></div><div class="ms" style="left:1560px;top:647px;transform:translateX(-50%)">Errors</div>
<div class="btn" style="left:1607px;top:643px;width:100px;height:21px"></div><div class="led r" style="left:1610px;top:647px"></div><div class="ms" style="left:1656px;top:647px;transform:translateX(-50%)">Dry Run</div>
<div class="btn" style="left:1725px;top:643px;width:31px;height:21px"></div><div class="ms" style="left:1740px;top:647px;transform:translateX(-50%)">OK</div>
<!-- SPLITTER + LOG -->
<div class="a" style="left:0;top:953px;width:1920px;height:1px;background:#6a6a6a"></div>
<div class="a" style="left:0;top:954px;width:1920px;height:4px;background:#fff"></div>
<svg class="a" style="left:0;top:955px" width="1919" height="2" viewBox="0 0 1919 2" shape-rendering="crispEdges"><defs><pattern id="hp" width="2" height="2" patternUnits="userSpaceOnUse"><rect x="0" y="1" width="1" height="1" fill="#000"/><rect x="1" y="0" width="1" height="1" fill="#000"/></pattern></defs><rect width="1920" height="2" fill="url(#hp)"/></svg>
<div class="a" style="left:0;top:958px;width:1920px;height:1px;background:#6a6a6a"></div>
<div class="a" style="left:0;top:959px;width:1920px;height:69px;background:#f0f0f0"></div>
<div class="a" style="left:0;top:958px;width:1px;height:70px;background:#6a6a6a"></div>
<div class="a" style="left:1919px;top:958px;width:1px;height:70px;background:#6a6a6a"></div>
<div class="a" style="left:1918px;top:959px;width:1px;height:68px;background:#f8f8f8"></div>
<div class="ms" style="left:7px;top:965px;letter-spacing:0">Show in Log:</div>
<div class="led r" style="left:84px;top:965px"></div><div class="ms" style="left:97.5px;top:965px;letter-spacing:-0.58px">Commands</div>
<div class="led g" style="left:174px;top:965px"></div><div class="ms" style="left:188px;top:965px;letter-spacing:-0.4px">Infos</div>
<div class="led g" style="left:235px;top:965px"></div><div class="ms" style="left:248.5px;top:965px;letter-spacing:0">Warnings</div>
<div class="led g" style="left:318px;top:965px"></div><div class="ms" style="left:332px;top:965px;letter-spacing:-0.45px">Errors</div>
<div class="led r" style="left:383px;top:965px"></div><div class="ms" style="left:397px;top:965px;letter-spacing:-0.4px">ACK</div>
<div class="led g" style="left:442px;top:965px"></div><div class="ms" style="left:455.5px;top:965px;letter-spacing:-0.15px">Auto Scroll</div>
<svg class="a" style="left:533px;top:965px" width="13" height="14" viewBox="0 0 13 14"><path d="M1.2 2.9H11.4 M4.3 2.6V1.3H8.3V2.6" fill="none" stroke="#777" stroke-width="1.3"/><path d="M2.2 4.3H10.4V12.6H2.2z" fill="#b4b4b4" stroke="#777" stroke-width="1.2"/><path d="M4.7 5.4V11.6 M6.3 5.4V11.6 M7.9 5.4V11.6" stroke="#777" stroke-width=".9"/></svg>
<div class="ms" style="left:548px;top:965px;letter-spacing:-0.2px">Clear Log</div>
<svg class="a" style="left:616px;top:965px" width="14" height="14" viewBox="0 0 14 14"><path d="M1.5 2.3H5.2L6.8 3.9V9.3H1.5z" fill="#e6e6e6" stroke="#777" stroke-width="1.2"/><path d="M5.8 5.3H10.4L12.2 7.1V12.7H5.8z" fill="#f2f2f2" stroke="#777" stroke-width="1.2"/><path d="M3.4 2.3V1.3H5" stroke="#777" stroke-width="1" fill="none"/></svg>
<div class="ms" style="left:632.5px;top:965px;letter-spacing:-0.25px">Copy</div>
<!-- log list -->
<div class="a" style="left:1px;top:984px;width:102px;height:43px;background:#5f9ea0"></div>
<div class="a" style="left:103px;top:984px;width:1800px;height:16px;background:#faf0e6"></div>
<div class="a" style="left:103px;top:1000px;width:1800px;height:16px;background:#fff"></div>
<div class="a mono" style="left:7px;top:987.3px;color:#eef6f6">19:59:48.038</div>
<div class="a mono" style="left:7px;top:1003.3px;color:#eef6f6">19:59:48.054</div>
<div class="a mono" style="left:109px;top:987.3px;color:#00009c">Gcode/PLA/humidity_base.gcode 951168</div>
<div class="a mono" style="left:109px;top:1003.3px;color:#00009c">End file list</div>
<svg class="a" style="left:1903px;top:984px" width="15" height="43" viewBox="0 0 15 43"><path d="M3.5 10.8L7.3 7L11.1 10.8z" fill="#3a3a3a"/><path d="M3.5 33L7.3 36.8L11.1 33z" fill="#3a3a3a"/></svg>
<!-- status bar -->
<div class="a" style="left:0;top:1027px;width:1920px;height:1px;background:#6a6a6a"></div>
<div class="a" style="left:0;top:1028px;width:1920px;height:2px;background:#fff"></div>
<div class="a" style="left:0;top:1028px;width:1919px;height:1px;background:#b9b9b9"></div>
<div class="a" style="left:1px;top:1030px;width:1919px;height:18px;background:#f1eded"></div><div class="a" style="left:0;top:1028px;width:1px;height:22px;background:#fff"></div>
<div class="a" style="left:0;top:1048px;width:1920px;height:2px;background:#fff"></div>
<div class="a" style="left:14.5px;top:1044.8px;width:25px;height:16px;border-radius:50%;background:linear-gradient(#c4d2df,#aebfd0);border:1.3px solid #245f8c;z-index:5"></div>
<div class="ui" style="left:4.5px;top:1033px;letter-spacing:-0.1px">Connected: Orion Delta</div>
<div class="ui" style="left:799px;top:1033px;letter-spacing:-0.19px">Extruder: 24.5°C/Off Bed: 90.3/90°C</div>
<div class="ui" style="left:1665px;top:1033px">Idle</div>
<div class="a" style="left:1690px;top:1031px;width:214px;height:16px;border:1px solid #b2b2b2;border-radius:3px;background:linear-gradient(#f2f2f2 0%,#dcdcdc 30%,#cacaca 60%,#d2d2d2 100%);box-shadow:inset 0 0 0 1px rgba(255,255,255,.6)"></div>
</body>
</html>
